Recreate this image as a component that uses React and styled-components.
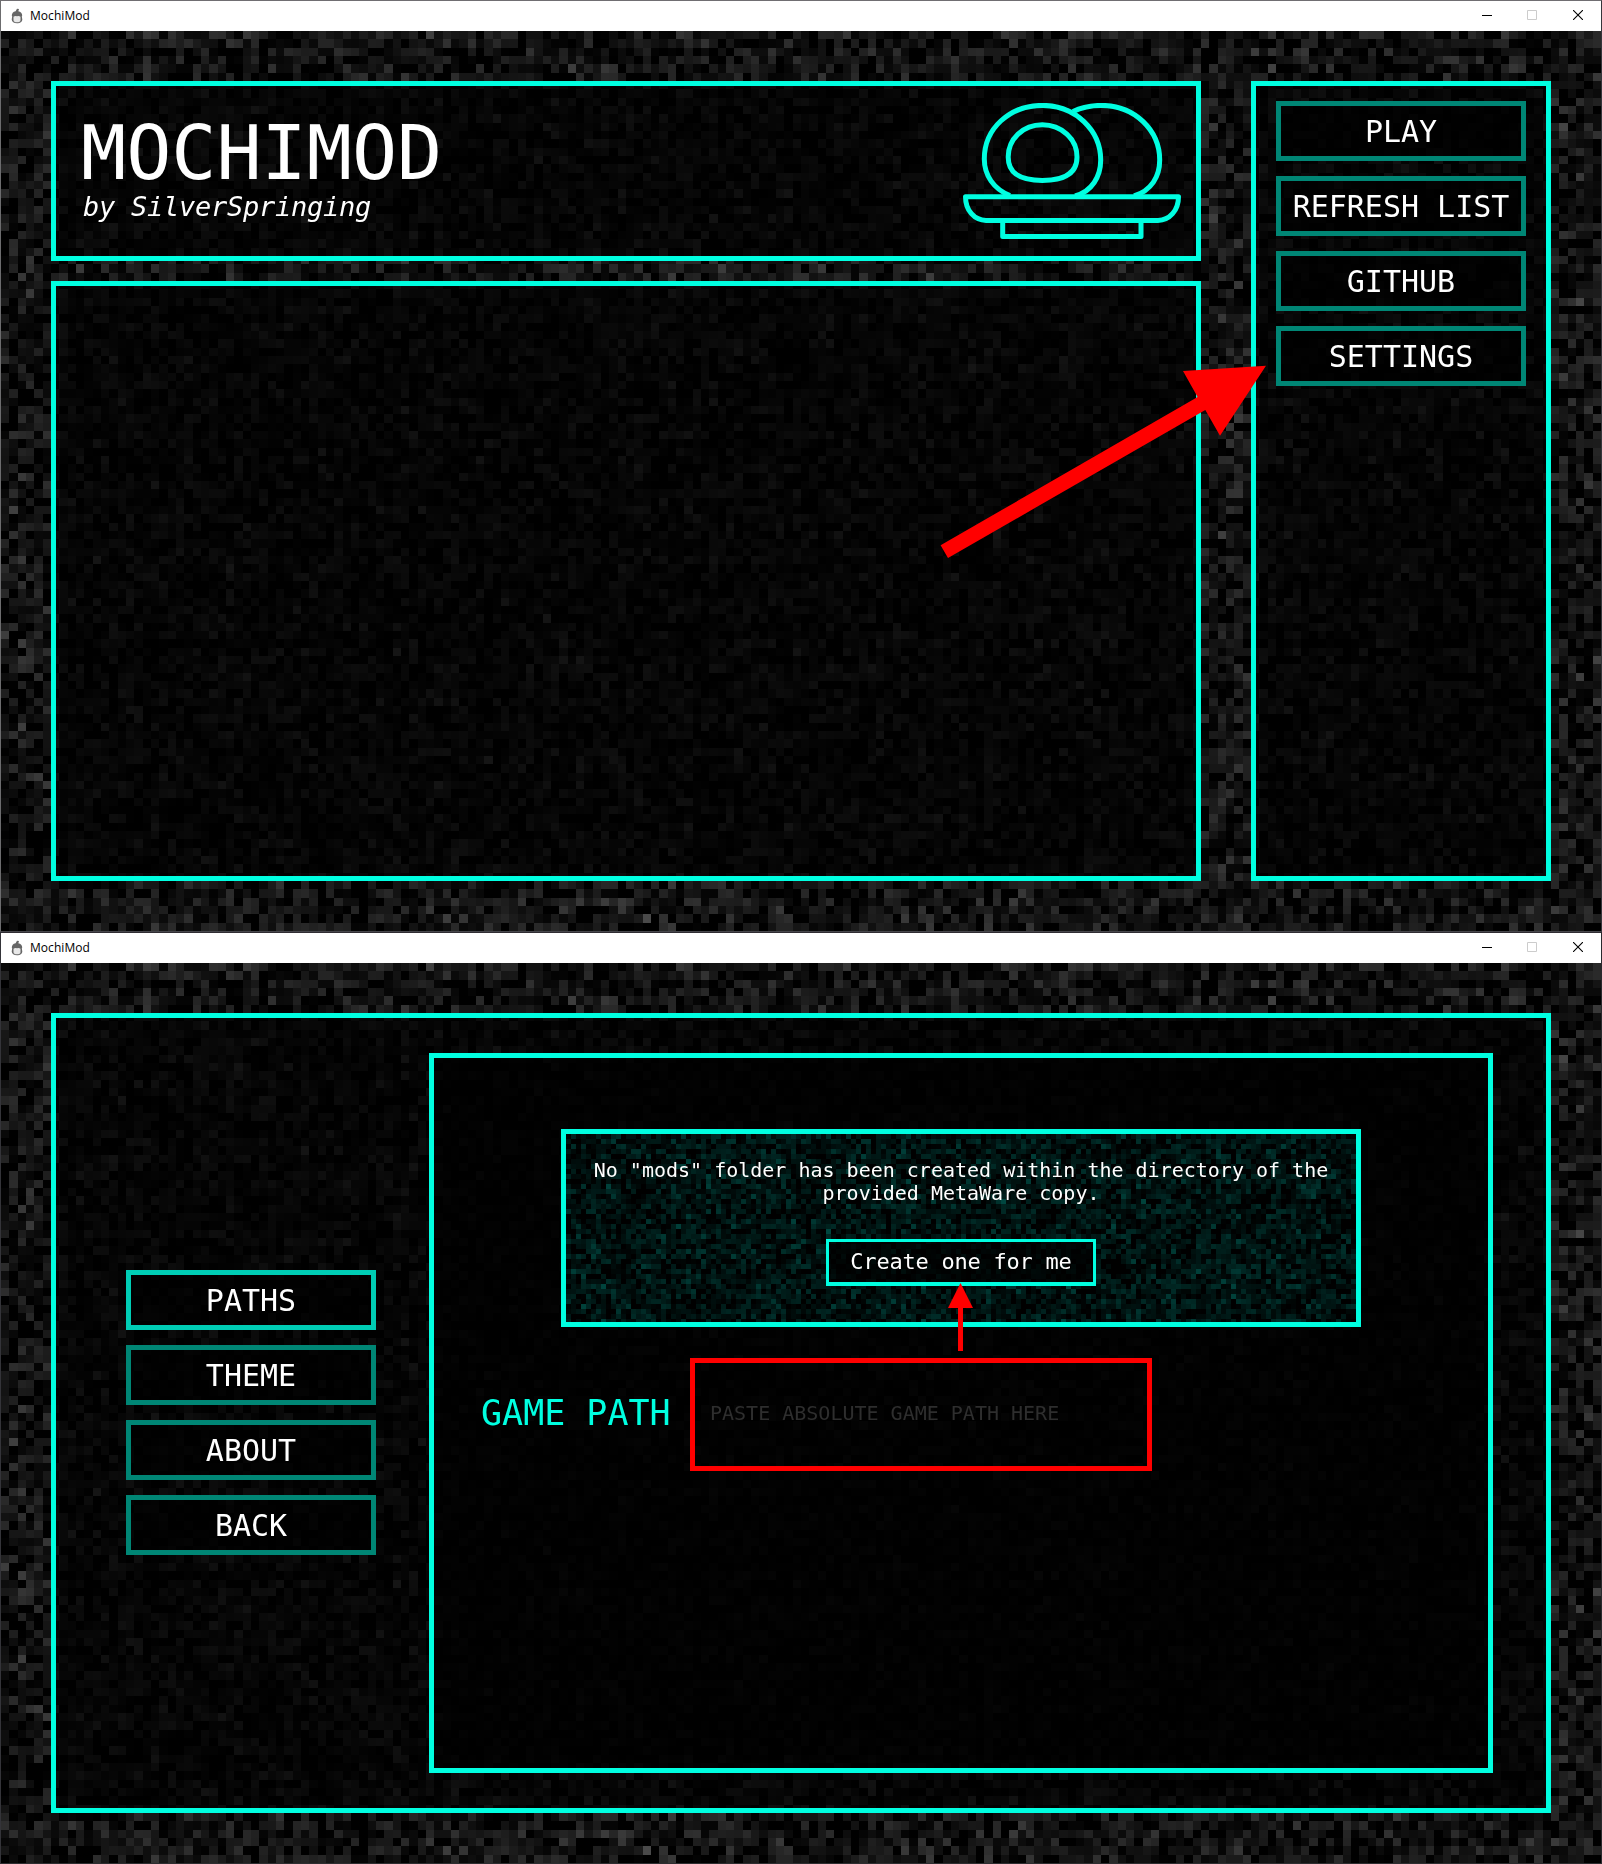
import React, { useLayoutEffect, useRef } from "react";
import styled, { createGlobalStyle } from "styled-components";

const ACCENT = "#00ffe1";
const MONO = '"DejaVu Sans Mono", "Liberation Mono", monospace';

const GlobalStyle = createGlobalStyle`
  *, *::before, *::after { box-sizing: border-box; }
  body { margin: 0; background: #000; }
`;

const Stage = styled.main`
  position: relative;
  display: flex;
  flex-direction: column;
  width: 1602px;
  height: 1864px;
  overflow: hidden;
  font-family: ${MONO};
  color: #fff;
`;

const Frame = styled.section`
  height: 932px;
  display: flex;
  flex-direction: column;
  border: 1px solid;
  border-color: ${(p) => (p.$dim ? "#302d33 #2a2a2e #2d2d30 #343439" : "#706e72 #36363c #47474c #6c6c6e")};
`;

const TitleBar = styled.header`
  height: 30px;
  flex: none;
  display: flex;
  align-items: center;
  background: #fff;
  padding-left: 10px;
`;

const TitleText = styled.span`
  flex: 1;
  margin-left: 7px;
  font: 12px/30px "Open Sans", "Noto Sans", sans-serif;
  letter-spacing: 0.05px;
  color: #000;
`;

const WindowControls = styled.div`
  display: flex;
`;

const Control = styled.span`
  width: ${(p) => p.$w ?? 46}px;
  height: 30px;
  padding-bottom: 2px;
  display: grid;
  place-items: center;
`;

const Content = styled.div`
  position: relative;
  isolation: isolate;
  height: 900px;
  padding: 50px;
  display: flex;
  gap: 50px;
  background: #000;
`;

const NoiseCanvas = styled.canvas`
  position: absolute;
  z-index: -1;
  top: 0;
  left: 0;
  width: ${(p) => p.$w}px;
  height: ${(p) => p.$h}px;
  image-rendering: pixelated;
`;

const Panel = styled.div`
  border: 5px solid ${ACCENT};
  background: rgba(0, 0, 0, 0.7);
`;

const MainColumn = styled.div`
  width: 1150px;
  display: flex;
  flex-direction: column;
  gap: 20px;
`;

const Banner = styled(Panel)`
  height: 180px;
  padding: 0 15px 0 25px;
  display: flex;
  justify-content: space-between;
  align-items: center;
`;

const BannerTitle = styled.h1`
  margin: -2px 0 0;
  font-size: 75px;
  line-height: 75px;
  font-weight: 400;
`;

const Byline = styled.p`
  margin: 0 0 2px 2px;
  font-size: 27px;
  line-height: 32px;
  letter-spacing: -0.25px;
  font-style: italic;
`;

const ModList = styled(Panel)`
  height: 600px;
`;

const SideMenu = styled(Panel)`
  width: 300px;
  height: 800px;
  padding: 15px 20px;
  display: flex;
  flex-direction: column;
  gap: 15px;
`;

const MenuButton = styled.button`
  width: 250px;
  height: 60px;
  flex: none;
  padding: 2px 0 0;
  border: 5px solid ${(p) => (p.$active ? "#00cdb5" : "#008675")};
  background: rgba(0, 0, 0, 0.7);
  color: #fff;
  font: 30px/48px ${MONO};
  white-space: nowrap;
`;

const SettingsPanel = styled(Panel)`
  width: 1500px;
  height: 800px;
  padding: 35px 53px 35px 70px;
  display: flex;
  justify-content: space-between;
`;

const Tabs = styled.nav`
  display: flex;
  flex-direction: column;
  justify-content: center;
  gap: 15px;
  padding-bottom: 1px;
`;

const PathsPanel = styled(Panel)`
  width: 1064px;
  height: 720px;
  padding: 71px 45px;
`;

const Notice = styled.div`
  position: relative;
  isolation: isolate;
  overflow: hidden;
  width: 800px;
  height: 198px;
  margin: 0 auto;
  padding-top: 25px;
  border: 5px solid ${ACCENT};
  background: #000;
  display: flex;
  flex-direction: column;
  align-items: center;
`;

const NoticeText = styled.p`
  margin: 0;
  width: 750px;
  font-size: 20px;
  line-height: 23px;
  text-align: center;
`;

const CreateButton = styled.button`
  margin-top: 34px;
  width: 270px;
  height: 47px;
  padding: 0;
  border: 3px solid ${ACCENT};
  border-bottom-width: 4px;
  background: rgba(0, 0, 0, 0.75);
  color: #fff;
  font: 22px/40px ${MONO};
  letter-spacing: -0.23px;
`;

const PathRow = styled.div`
  margin-top: 31px;
  display: flex;
  align-items: center;
`;

const PathLabel = styled.label`
  width: 211px;
  padding: 0 0 4px 2px;
  font-size: 35px;
  line-height: 40px;
  color: ${ACCENT};
`;

const PathInput = styled.input`
  width: 462px;
  height: 113px;
  padding: 0 15px 4px;
  border: 5px solid #f00;
  border-radius: 0;
  background: transparent;
  font: 20px ${MONO};
  color: #fff;
  &::placeholder { color: #2e2e2e; opacity: 1; }
`;

const Annotations = styled.svg`
  position: absolute;
  top: 0;
  left: 0;
  pointer-events: none;
`;

function Noise({ cols, rows, cell, tint, seed }) {
  const ref = useRef(null);
  useLayoutEffect(() => {
    const ctx = ref.current.getContext("2d");
    const image = ctx.createImageData(cols, rows);
    let s = seed;
    const rand = () => {
      s = (s + 0x6d2b79f5) | 0;
      let t = Math.imul(s ^ (s >>> 15), 1 | s);
      t = (t + Math.imul(t ^ (t >>> 7), 61 | t)) ^ t;
      return ((t ^ (t >>> 14)) >>> 0) / 4294967296;
    };
    for (let i = 0; i < cols * rows; i++) {
      const g = rand() + rand() + rand() + rand() - 2;
      const v = Math.max(0, 16 + g * 31);
      image.data[i * 4] = v * tint[0];
      image.data[i * 4 + 1] = v * tint[1];
      image.data[i * 4 + 2] = v * tint[2];
      image.data[i * 4 + 3] = 255;
    }
    ctx.putImageData(image, 0, 0);
  }, [cols, rows, tint, seed]);
  return <NoiseCanvas ref={ref} width={cols} height={rows} $w={cols * cell} $h={rows * cell} />;
}

const GREY = [1, 1, 1];
const TEAL = [0, 1, 0.9];

function AppIcon() {
  return (
    <svg width="12" height="16" viewBox="0 0 12 16">
      <path d="M4.600 3.200 6 .800l2 .100-.700 2.300C9.800 3.700 11.200 5.200 11.200 7.600L10.800 8.500l.500 3c0 2.400-2.300 3.800-5.300 3.800S.700 13.900.700 11.500L1.200 8.500.800 7.600C.800 5.500 2 3.700 4.600 3.200Z" fill="#666" />
      <path d="M2.500 8.800Q4 7.600 6 8.300Q8 7.600 9.500 8.800V12.200Q9.300 14.300 6 14.300T2.500 12.200Z" fill="#e8e8e8" />
    </svg>
  );
}

function MochiPlate() {
  return (
    <svg width="218" height="136" viewBox="23 33 218 136" fill="none" stroke={ACCENT} strokeWidth="5" strokeLinejoin="round">
      <path d="M25.500 126.700H238.500C238.500 140.500 229.500 150.400 218 150.400H46C34.500 150.400 25.500 140.500 25.500 126.700Z" />
      <path d="M62.700 151V166.400H201V151" />
      <path d="M70 125.500C53.500 119 44.300 105 44.300 89C44.300 58.500 69.500 35.400 102.500 35.400C135.500 35.400 160.700 60.500 160.700 90C160.700 106.500 152 121.500 135 126" />
      <path d="M133 41.500C141 37.500 150 35.400 161.500 35.400C195 35.400 219.700 60.500 219.700 90C219.700 106.500 211.500 120.500 194 126" />
      <path d="M102.300 54.700C83 54.700 68.200 69 68.200 87C68.200 103.500 80 110.400 102.300 110.400S137 103.500 137 87C137 69 121.500 54.700 102.300 54.700Z" />
    </svg>
  );
}

function Window({ dim, children }) {
  return (
    <Frame $dim={dim}>
      <TitleBar>
        <AppIcon />
        <TitleText>MochiMod</TitleText>
        <WindowControls>
          <Control $w={44}>
            <svg width="10" height="10"><path d="M0 5.500H10" stroke="#000" /></svg>
          </Control>
          <Control>
            <svg width="10" height="10"><path d="M.5.5H9.500V9.500H.5Z" stroke="#ccc" fill="none" /></svg>
          </Control>
          <Control>
            <svg width="10" height="10"><path d="M0 0 10 10M10 0 0 10" stroke="#000" strokeWidth="1.100" /></svg>
          </Control>
        </WindowControls>
      </TitleBar>
      <Content>
        <Noise cols={192} rows={108} cell={25 / 3} tint={GREY} seed={7} />
        {children}
      </Content>
    </Frame>
  );
}

export default function App() {
  return (
    <Stage>
      <GlobalStyle />
      <Window>
        <MainColumn>
          <Banner>
            <div>
              <BannerTitle>MOCHIMOD</BannerTitle>
              <Byline>by SilverSpringing</Byline>
            </div>
            <MochiPlate />
          </Banner>
          <ModList />
        </MainColumn>
        <SideMenu>
          {["PLAY", "REFRESH LIST", "GITHUB", "SETTINGS"].map((label) => (
            <MenuButton key={label}>{label}</MenuButton>
          ))}
        </SideMenu>
      </Window>
      <Window dim>
        <SettingsPanel>
          <Tabs>
            {["PATHS", "THEME", "ABOUT", "BACK"].map((label) => (
              <MenuButton key={label} $active={label === "PATHS"}>{label}</MenuButton>
            ))}
          </Tabs>
          <PathsPanel>
            <Notice>
              <Noise cols={158} rows={38} cell={5} tint={TEAL} seed={21} />
              <NoticeText>
                No "mods" folder has been created within the directory of the provided MetaWare copy.
              </NoticeText>
              <CreateButton>Create one for me</CreateButton>
            </Notice>
            <PathRow>
              <PathLabel htmlFor="game-path">GAME PATH</PathLabel>
              <PathInput id="game-path" placeholder="PASTE ABSOLUTE GAME PATH HERE" />
            </PathRow>
          </PathsPanel>
        </SettingsPanel>
      </Window>
      <Annotations width="1602" height="1864" fill="#f00">
        <polygon points="940.600,545.300 948,558 1205.300,410 1220,435.700 1266,365.700 1183,371 1197.600,397" />
        <polygon points="960.500,1283 973,1308 963,1308 963,1351 958,1351 958,1308 948,1308" />
      </Annotations>
    </Stage>
  );
}
